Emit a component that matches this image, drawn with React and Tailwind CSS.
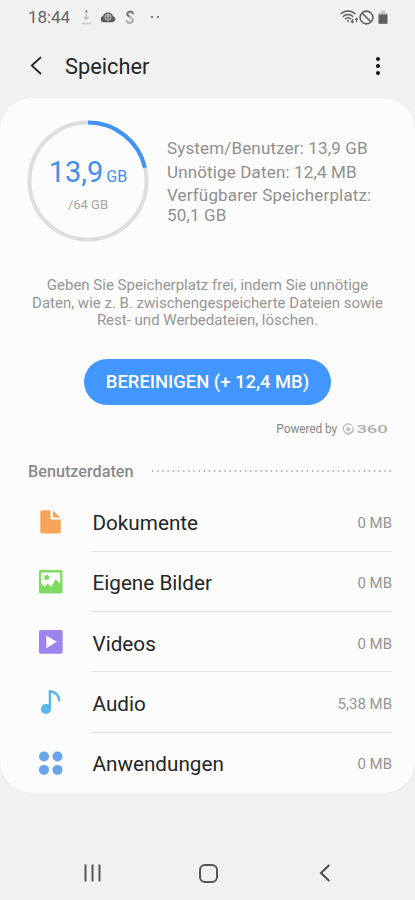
import React from "react";

function StatusBar() {
  return (
    <div className="flex h-[34px] items-center justify-between pl-7 pr-[26px] text-[#666]">
      <div className="flex items-center">
        <span className="w-[43px] text-[17px] leading-[34px] tracking-[-0.1px]">18:44</span>
        <svg className="ml-[10px]" width="11" height="16" viewBox="0 0 11 16" fill="none">
          <circle cx="5.3" cy="2.4" r="1.2" fill="#888" />
          <path d="M5.3 4.5v5.5M3 8l2.3 2.5L7.6 8" stroke="#c4c4c4" strokeWidth="1.5" />
          <path d="M0.5 14.5h10" stroke="#d0d0d0" strokeWidth="1.6" />
        </svg>
        <svg className="ml-2" width="16" height="12" viewBox="0 0 16 12">
          <path d="M3.4 11.3a3.2 3.2 0 0 1-.5-6.2A5.3 5.3 0 0 1 13 5.1a3.2 3.2 0 0 1-.3 6.2z" fill="#5b5b5b" />
          <circle cx="8" cy="6.2" r="3" fill="none" stroke="#ddd" strokeWidth="0.9" />
          <path d="M8 8.2V4.3M6.600 5.800L8 4.300l1.400 1.500" fill="none" stroke="#ddd" strokeWidth="0.9" />
        </svg>
        <svg className="ml-[9px]" width="10" height="14" viewBox="0 0 10 14" fill="none" strokeWidth="2.2" strokeLinecap="round">
          <path d="M8 3.2A3.2 3.2 0 0 0 2.3 3.4C1.8 5.3 3.6 6 5 7" stroke="#777" />
          <path d="M5 7c1.7 1 3.3 1.8 2.8 3.7A3.2 3.2 0 0 1 1.8 11" stroke="#b0b0b0" />
        </svg>
        <span className="ml-4 size-[2px] rounded-full bg-[#555]" />
        <span className="ml-[4px] size-[2px] rounded-full bg-[#555]" />
      </div>
      <div className="flex items-center">
        <svg width="18" height="14" viewBox="0 0 18 14" fill="none" stroke="#5d5d5d" strokeWidth="1.4">
          <path d="M0.6 4.1C4.6-.1 11.4-.1 15.4 4.1" />
          <path d="M2.8 6.7c3-3 7.4-3 10.4 0" />
          <path d="M5 9.2c1.9-1.8 4.1-1.8 6 0" />
          <circle cx="8" cy="11" r="1" fill="#5d5d5d" stroke="none" />
          <path d="M12.3 8.5v4.2M10.9 11.2l1.4 1.5 1.4-1.5M16.4 12.2V8.3M15 9.7l1.4-1.5 1.4 1.5" strokeWidth="1.1" />
        </svg>
        <svg className="ml-px" width="15" height="15" viewBox="0 0 15 15" fill="none" stroke="#5d5d5d" strokeWidth="1.6">
          <circle cx="7.5" cy="7.5" r="6.4" />
          <path d="M3 3l9 9" />
        </svg>
        <svg className="ml-1 mr-px" width="10" height="15" viewBox="0 0 10 15">
          <path d="M0.5 3h2V.8h5V3h2v2h-9z" fill="#c6c6c6" />
          <path d="M0.5 4.5h9v9.3h-9z" fill="#5f5f5f" />
        </svg>
      </div>
    </div>
  );
}

function Header() {
  return (
    <header className="flex h-16 items-center pl-[30px] pr-[35px]">
      <svg width="12" height="20" viewBox="0 0 12 20" fill="none" stroke="#1c1c1c" strokeWidth="1.8">
        <path d="M11 1.2L1.800 9.600 11 18" />
      </svg>
      <h1 className="ml-[23px] flex-1 pt-0.5 text-[21.8px] leading-none text-[#252525]">Speicher</h1>
      <div className="flex flex-col gap-[3px]">
        <span className="size-1 rounded-full bg-[#111]" />
        <span className="size-1 rounded-full bg-[#111]" />
        <span className="size-1 rounded-full bg-[#111]" />
      </div>
    </header>
  );
}

function UsageRing() {
  const r = 58.5;
  const c = 2 * Math.PI * r;
  return (
    <div className="grid size-[122px] shrink-0 place-items-center">
      <svg className="col-start-1 row-start-1" width="122" height="122" viewBox="0 0 122 122" fill="none" strokeWidth="4">
        <circle cx="61" cy="61" r={r} stroke="#dedede" />
        <circle cx="61" cy="61" r={r} stroke="#4093f8" strokeDasharray={`${c * 0.213} ${c}`} transform="rotate(-90 61 61)" />
      </svg>
      <div className="col-start-1 row-start-1 flex flex-col items-center pt-1">
        <p className="whitespace-nowrap text-[29px] leading-9 text-[#418ff0]">
          13,9<span className="ml-[3px] text-[16px]">GB</span>
        </p>
        <p className="mt-[2px] text-[13px] leading-4 text-[#a5a5a5]">/64 GB</p>
      </div>
    </div>
  );
}

function Logo360() {
  return (
    <svg width="46" height="14" viewBox="0 0 46 14" fill="none" stroke="#b4b4b4">
      <path d="M9.5 3.2A4.8 4.8 0 1 0 10.8 7.8" strokeWidth="1.1" />
      <path d="M3.2 11A4.8 4.8 0 0 0 10.6 5" strokeWidth="1" />
      <path d="M6.2 5v4.6M3.9 7.3h4.6" strokeWidth="1.4" />
      <text x="14.5" y="11.3" fontSize="10.5" fontWeight="500" textLength="31" lengthAdjust="spacingAndGlyphs" fill="#b0b0b0" stroke="none">360</text>
    </svg>
  );
}

const rows = [
  {
    label: "Dokumente",
    size: "0 MB",
    icon: (
      <g fill="#f7a557">
        <path d="M3 .3h8.500v9.200h10.300v12.200a1.700 1.700 0 0 1-1.700 1.700H3a1.700 1.700 0 0 1-1.700-1.700V2A1.700 1.700 0 0 1 3 .3z" />
        <path d="M14 .5l7.500 7H14z" />
      </g>
    ),
  },
  {
    label: "Eigene Bilder",
    size: "0 MB",
    icon: (
      <g>
        <rect x="0" y="0" width="23.5" height="23.5" rx="1.6" fill="#7ddb62" />
        <path d="M2.300 2.500h18.900v11.300l-4.600-4.500-4.200 7.400-3.700-3-3.300 3-3.100-3z" fill="#fcfcfc" />
        <circle cx="7.7" cy="7.5" r="2.5" fill="#7ddb62" />
      </g>
    ),
  },
  {
    label: "Videos",
    size: "0 MB",
    icon: (
      <g>
        <rect x="0" y="0" width="23.7" height="23.7" rx="1.8" fill="#9c83ee" />
        <path d="M7.300 5.500v12.700L17.700 11.800z" fill="#fcfcfc" />
      </g>
    ),
  },
  {
    label: "Audio",
    size: "5,38 MB",
    icon: (
      <g>
        <circle cx="7" cy="19" r="5" fill="#56b4ee" />
        <path d="M10.900 19V1.300c5 .6 9.300 3.500 9.300 10" fill="none" stroke="#56b4ee" strokeWidth="2.4" />
      </g>
    ),
  },
  {
    label: "Anwendungen",
    size: "0 MB",
    icon: (
      <g fill="#68a4ec">
        <circle cx="5" cy="5.5" r="5" />
        <circle cx="18.5" cy="5.5" r="5" />
        <circle cx="5" cy="18.9" r="5" />
        <circle cx="18.5" cy="18.9" r="5" />
      </g>
    ),
  },
];

function DataRow({ label, size, icon, last }) {
  return (
    <li className="flex h-[60.3px] pl-[39px] pr-[23px]">
      <svg className="mt-[18px] shrink-0" width="24" height="24" viewBox="0 0 24 24">
        {icon}
      </svg>
      <div className={`ml-7 flex flex-1 items-center justify-between border-b pt-[5px] ${last ? "border-transparent" : "border-[#e3e3e3]"}`}>
        <span className="pl-[1.5px] text-[20.7px] text-[#252525]">{label}</span>
        <span className="pb-px text-[15px] text-[#949494]">{size}</span>
      </div>
    </li>
  );
}

function NavBar() {
  return (
    <nav className="flex h-[54px] items-center pl-[84px]">
      <svg width="17" height="18" viewBox="0 0 17 18" stroke="#555" strokeWidth="2">
        <path d="M1.500 .5v17M8.500 .5v17M15.500 .5v17" />
      </svg>
      <svg className="ml-[98px]" width="19" height="19" viewBox="0 0 19 19" fill="none" stroke="#555" strokeWidth="2">
        <rect x="1" y="1" width="17" height="17" rx="5" />
      </svg>
      <svg className="ml-[101px]" width="11" height="18" viewBox="0 0 11 18" fill="none" stroke="#4c4c4c" strokeWidth="2">
        <path d="M10.300 1L2 9l8.300 8" />
      </svg>
    </nav>
  );
}

export default function App() {
  return (
    <div className="flex h-[900px] w-[415px] flex-col overflow-hidden bg-[#f1f1f1] font-['Roboto',sans-serif]">
      <StatusBar />
      <Header />
      <main className="flex h-[695px] flex-col rounded-[31px] bg-[#fcfcfc] shadow-[0_0_1px_#d4d4d4]">
        <section className="flex pl-[27px] pt-[22px]">
          <UsageRing />
          <div className="ml-[18px] mt-[18px] flex w-[215px] flex-col gap-[3.5px] text-[17px] leading-5 tracking-[0.15px] text-[#8f8f8f]">
            <p>System/Benutzer: 13,9 GB</p>
            <p>Unnötige Daten: 12,4 MB</p>
            <p>Verfügbarer Speicherplatz:<br />50,1 GB</p>
          </div>
        </section>
        <p className="mt-[35px] text-center text-[15px] leading-[17.7px] text-[#969696]">
          Geben Sie Speicherplatz frei, indem Sie unnötige<br />
          Daten, wie z. B. zwischengespeicherte Dateien sowie<br />
          Rest- und Werbedateien, löschen.
        </p>
        <button className="mt-[29px] h-[46px] w-[247px] self-center rounded-full bg-[#4196ff] pb-px text-[18.4px] font-medium text-white">
          BEREINIGEN (+ 12,4 MB)
        </button>
        <div className="mt-4 flex h-4 items-center justify-end gap-[5px] pr-[27px] text-[12px] tracking-[-0.15px] text-[#858585]">
          <span>Powered by</span>
          <Logo360 />
        </div>
        <div className="mt-[25px] flex h-5 items-center pl-7 pr-6">
          <h2 className="w-[124px] pt-0.5 text-[16.2px] font-medium text-[#8a8a8a]">Benutzerdaten</h2>
          <svg className="-mt-0.5 flex-1" height="2" viewBox="0 0 239 2" preserveAspectRatio="none">
            <path d="M0 1h239" stroke="#a0a0a0" strokeWidth="1.4" strokeDasharray="1.5 3.66" />
          </svg>
        </div>
        <ul className="mt-[10px]">
          {rows.map((row, i) => (
            <DataRow key={row.label} {...row} last={i === rows.length - 1} />
          ))}
        </ul>
      </main>
      <div className="h-[53px]" />
      <NavBar />
    </div>
  );
}
